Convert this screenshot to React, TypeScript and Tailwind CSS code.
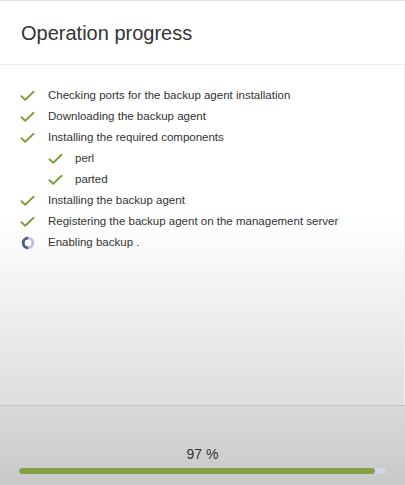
const Check = ({ className }: { className?: string }) => (
    <svg viewBox="0 0 16 12" className={className} fill="none">
        <path d="M1.5 6.2 L5.6 10 L14.5 1.5" stroke="#7aa03c" strokeWidth="2" strokeLinecap="round" strokeLinejoin="round" />
    </svg>
);

const Spinner = () => (
    <svg viewBox="0 0 14 14" className="w-[14px] h-[14px]">
        <circle cx="7" cy="7" r="4.8" stroke="#b9c0d8" strokeWidth="2.8" fill="none" />
        <path d="M7 11.8 A4.8 4.8 0 0 1 7 2.2" stroke="#4d5d8f" strokeWidth="2.8" fill="none" />
    </svg>
);

type Step = { label: string; sub?: boolean; state: "done" | "running" };

const steps: Step[] = [
    { label: "Checking ports for the backup agent installation", state: "done" },
    { label: "Downloading the backup agent", state: "done" },
    { label: "Installing the required components", state: "done" },
    { label: "perl", sub: true, state: "done" },
    { label: "parted", sub: true, state: "done" },
    { label: "Installing the backup agent", state: "done" },
    { label: "Registering the backup agent on the management server", state: "done" },
    { label: "Enabling backup .", state: "running" },
];

export default function App() {
    const percent = 97;

    return (
        <div
            className="w-[405px] h-[485px] flex flex-col border-t border-[#dfe2e6] overflow-hidden"
            style={{ fontFamily: '"Liberation Sans", Arial, sans-serif' }}
        >
            {/* Header */}
            <div className="h-[64px] shrink-0 flex items-center px-[21px] bg-white border-b border-[#ebebeb] text-[20px] text-[#333]">
                Operation progress
            </div>

            {/* Steps */}
            <div className="flex-1 bg-gradient-to-b from-white from-45% to-[#dedede] pt-[20px] border-r border-[#f0f0f0]">
                {steps.map((s) => (
                    <div
                        key={s.label}
                        className={`h-[21px] flex items-center text-[11.5px] text-[#333] ${s.sub ? "pl-[48px]" : "pl-[20px]"}`}
                    >
                        <div className="w-[15px] flex justify-center">
                            {s.state === "done" ? <Check className="w-[15px] h-[12px]" /> : <Spinner />}
                        </div>
                        <span className={s.sub ? "ml-[12px]" : "ml-[13px]"}>{s.label}</span>
                    </div>
                ))}
            </div>

            {/* Footer */}
            <div className="h-[80px] shrink-0 border-t border-[#c2c2c2] bg-gradient-to-b from-[#d9d9d9] to-[#c9c9c9] flex flex-col items-center">
                <div className="mt-[39px] text-[14px] text-[#333] leading-[18px]">{percent} %</div>
                <div className="mt-[5px] w-[367px] h-[6px] rounded-full bg-[#d3d6e0] overflow-hidden">
                    <div className="h-full bg-[#84a046] rounded-full" style={{ width: `${percent}%` }} />
                </div>
            </div>
        </div>
    );
}
